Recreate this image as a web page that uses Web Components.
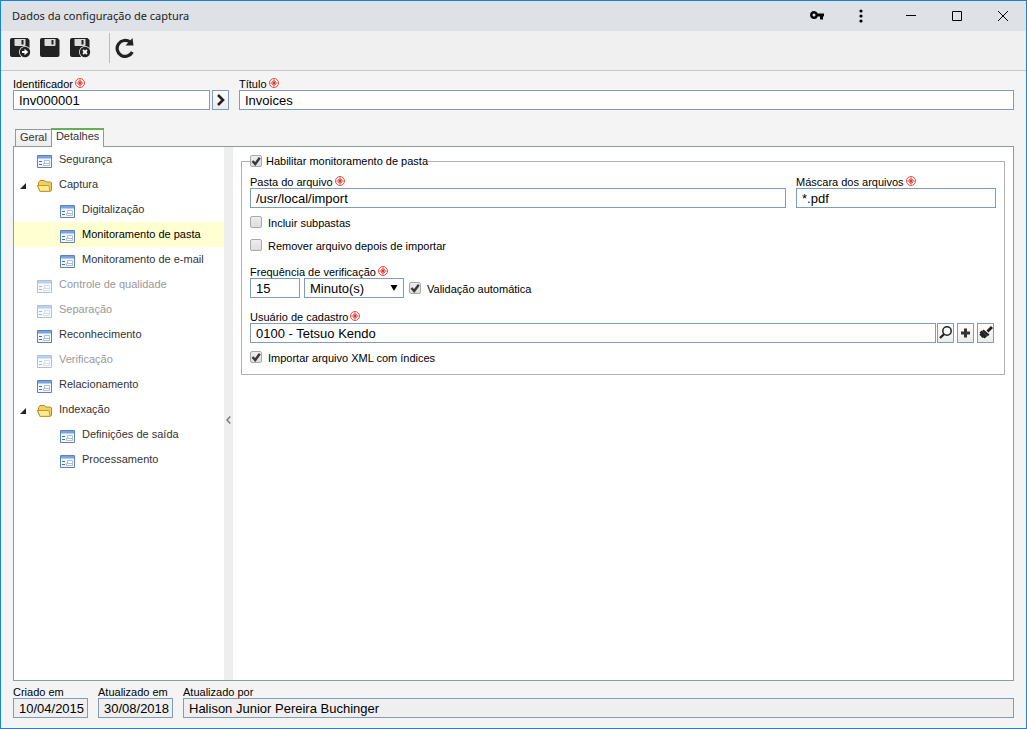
<!DOCTYPE html>
<html lang="pt-BR">
<head>
<meta charset="utf-8">
<title>Dados da configuração de captura</title>
<style>
  body { margin: 0; font: 11px/14px "Liberation Sans", Arial, sans-serif; color: #000; --line: #7f9db9; --frame: #8f9d9a; }
  .grow { flex: 1; }
</style>
</head>
<body>
<app-window>
  <title-bar slot="title">Dados da configuração de captura</title-bar>
  <tool-bar slot="tools"></tool-bar>
  <field-row>
    <text-field class="id" label="Identificador" value="Inv000001" required style="width:197px"></text-field>
    <icon-button icon="next" label="Próximo" style="margin-left:2px"></icon-button>
    <text-field class="grow" label="Título" value="Invoices" required style="margin-left:10px"></text-field>
  </field-row>
  <tab-strip></tab-strip>
  <split-panel>
    <nav-tree slot="side">
      <tree-item text="Segurança"></tree-item>
      <tree-item text="Captura" folder>
        <tree-item text="Digitalização" level="2"></tree-item>
        <tree-item text="Monitoramento de pasta" level="2" selected></tree-item>
        <tree-item text="Monitoramento de e-mail" level="2"></tree-item>
      </tree-item>
      <tree-item text="Controle de qualidade" disabled></tree-item>
      <tree-item text="Separação" disabled></tree-item>
      <tree-item text="Reconhecimento"></tree-item>
      <tree-item text="Verificação" disabled></tree-item>
      <tree-item text="Relacionamento"></tree-item>
      <tree-item text="Indexação" folder>
        <tree-item text="Definições de saída" level="2"></tree-item>
        <tree-item text="Processamento" level="2"></tree-item>
      </tree-item>
    </nav-tree>
    <group-box>
      <check-box slot="legend" label="Habilitar monitoramento de pasta" checked legend></check-box>
      <field-row style="gap:10px">
        <text-field class="grow" label="Pasta do arquivo" value="/usr/local/import" required></text-field>
        <text-field label="Máscara dos arquivos" value="*.pdf" required style="width:200px"></text-field>
      </field-row>
      <check-box label="Incluir subpastas" style="margin-top:8px"></check-box>
      <check-box label="Remover arquivo depois de importar" style="margin-top:9px"></check-box>
      <field-row style="margin-top:13px">
        <text-field label="Frequência de verificação" value="15" required style="width:50px"></text-field>
        <select-field label="Unidade" value="Minuto(s)" style="margin-left:4px"></select-field>
        <check-box label="Validação automática" checked style="margin:0 0 2px 5px"></check-box>
      </field-row>
      <field-row style="margin-top:13px; padding-right:2px; gap:3px">
        <text-field class="grow" label="Usuário de cadastro" value="0100 - Tetsuo Kendo" required></text-field>
        <icon-button icon="search" label="Pesquisar" style="margin-left:-2px"></icon-button>
        <icon-button icon="plus" label="Adicionar"></icon-button>
        <icon-button icon="brush" label="Limpar"></icon-button>
      </field-row>
      <check-box label="Importar arquivo XML com índices" checked style="margin-top:8px"></check-box>
    </group-box>
  </split-panel>
  <field-row slot="status" style="gap:10px">
    <text-field label="Criado em" value="10/04/2015" readonly style="width:75px"></text-field>
    <text-field label="Atualizado em" value="30/08/2018" readonly style="width:75px"></text-field>
    <text-field class="grow" label="Atualizado por" value="Halison Junior Pereira Buchinger" readonly></text-field>
  </field-row>
</app-window>

<script>
const base = '*{box-sizing:border-box} button{padding:0;font:inherit;cursor:pointer} svg{display:block} ';
function define(name, render) {
  customElements.define(name, class extends HTMLElement {
    connectedCallback() {
      if (this.shadowRoot) return;
      const root = this.attachShadow({ mode: 'open' });
      const t = document.createElement('template');
      const [css, html] = render(this);
      t.innerHTML = `<style>${base}${css}</style>${html}`;
      root.append(t.content.cloneNode(true));
    }
  });
}

define('app-window', () => [`
  :host{display:flex;flex-direction:column;min-height:100vh;box-sizing:border-box;border:1px solid #1883d7;background:#f4f4f4}
  main{flex:1;display:flex;flex-direction:column;padding:7px 12px 0}
  footer{padding:5px 12px 10px}`,
  `<slot name="title"></slot><slot name="tools"></slot><main><slot></slot></main><footer><slot name="status"></slot></footer>`]);

define('title-bar', () => [`
  :host{display:flex;height:30px;background:#dee1e6;color:#222}
  h1{flex:1;margin:0;padding-left:11px;font:400 11px/30px "Noto Sans","Open Sans",sans-serif}
  button{border:0;background:none;width:46px;display:grid;place-items:center}
  .app{width:44px} .more{margin-right:5px}`,
  `<h1><slot></slot></h1>
  <button class="app" aria-label="Chave"><svg width="16" height="12" viewBox="0 0 16 12"><path fill-rule="evenodd" d="M5 1a4 4 0 1 0 3.800 5.500H11V9.500h3V6.500H15V3.500H8.800A4 4 0 0 0 5 1zm0 2.500a1.500 1.500 0 1 1 0 3 1.500 1.500 0 0 1 0-3z" fill="#000"/></svg></button>
  <button class="app more" aria-label="Menu"><svg width="4" height="14"><circle cx="2" cy="2" r="1.600"/><circle cx="2" cy="7" r="1.600"/><circle cx="2" cy="12" r="1.600"/></svg></button>
  <button aria-label="Minimizar"><svg width="10" height="10"><path d="M0 4.500H10" stroke="#000"/></svg></button>
  <button aria-label="Maximizar"><svg width="10" height="10"><path d="M.5.5h9v9h-9z" fill="none" stroke="#000"/></svg></button>
  <button aria-label="Fechar"><svg width="10" height="10"><path d="M0 0L10 10M10 0L0 10" stroke="#000"/></svg></button>`]);

const disk = '<path fill="#222" d="M2 1H17.500L19.500 3V18Q19.500 20 17.500 20H2Q0 20 0 18V3Q0 1 2 1z"/><path fill="#dcdcdc" d="M4.500 2H15.500V8Q15.500 9 14.500 9H5.500Q4.500 9 4.500 8z"/><path fill="#222" d="M11.500 3h2v4.500h-2z"/>';
define('tool-bar', () => [`
  :host{display:flex;align-items:flex-start;gap:10px;height:40px;padding:2px 9px 0;background:#f0f0f0;border-bottom:1px solid #c8c8c8;box-sizing:border-box}
  button{border:0;background:none;margin-top:4px;width:20px;height:20px}
  i{width:1px;height:30px;margin-left:9px;margin-right:-5px;background:#bbb}`,
  `<button aria-label="Salvar e novo"><svg width="21" height="21">${disk}<circle cx="15" cy="15" r="6" fill="#f0f0f0"/><circle cx="15" cy="15" r="5.200" fill="#222"/><path fill="#fff" d="M12 14h2.500V11.800L18.300 15l-3.800 3.200V16H12z"/></svg></button>
  <button aria-label="Salvar"><svg width="21" height="21">${disk}</svg></button>
  <button aria-label="Salvar e fechar"><svg width="21" height="21">${disk}<circle cx="15" cy="15" r="6" fill="#f0f0f0"/><circle cx="15" cy="15" r="5.200" fill="#222"/><path stroke="#fff" stroke-width="1.800" d="M13 13l4 4M17 13l-4 4"/></svg></button>
  <i></i>
  <button aria-label="Atualizar"><svg width="20" height="21"><path d="M17.300 15A8 8 0 1 1 15.200 5.200" fill="none" stroke="#222" stroke-width="3.200"/><path d="M17.500 1L18.500 8.500H10.500z" fill="#222"/></svg></button>`]);

define('field-row', () => [`:host{display:flex;align-items:flex-end}`, `<slot></slot>`]);

const mark = '<svg class="req" width="10" height="10" aria-hidden="true"><circle cx="5" cy="5" r="4.500" fill="#fff" stroke="#e5382c" stroke-width=".9"/><path d="M5 1.500v7M1.500 5h7" stroke="#e0281e" stroke-width="1.200"/><path d="M3 3l4 4M7 3l-4 4" stroke="#e0281e" stroke-width=".7"/></svg>';
define('text-field', el => [`
  :host{display:block;min-width:0}
  label{display:flex;height:12px;line-height:12px;white-space:nowrap}
  .req{margin-left:2px;flex:none}
  input{display:block;width:100%;height:20px;margin:0;padding:0 0 0 5px;border:1px solid var(--line);border-radius:0;background:#fff;color:#000;font:13px "Liberation Sans",Arial,sans-serif;outline:0}
  input[readonly]{background:#efefef}`,
  `<label for="f">${el.getAttribute('label')}${el.hasAttribute('required') ? mark : ''}</label>
  <input id="f" type="text" value="${el.getAttribute('value')}" ${el.hasAttribute('readonly') ? 'readonly' : ''}>`]);

define('select-field', el => [`
  :host{display:block;width:100px;position:relative}
  select{display:block;width:100%;height:20px;margin:0;padding:0 18px 0 5px;border:1px solid var(--line);border-radius:0;background:#fff;color:#000;font:13px "Liberation Sans",Arial,sans-serif;appearance:none}
  svg{position:absolute;right:6px;top:7px;pointer-events:none}`,
  `<select aria-label="${el.getAttribute('label')}"><option>${el.getAttribute('value')}</option></select>
  <svg width="8" height="7"><path d="M.5 0h7L4 6z"/></svg>`]);

define('check-box', el => [`
  :host{display:block}
  label{display:flex;align-items:${el.hasAttribute('legend') ? 'center;gap:4px' : 'flex-start;gap:6px'};line-height:14px;white-space:nowrap}
  .box{display:grid;width:12px;height:12px}
  .box>*{grid-area:1/1}
  input{appearance:none;margin:0;width:12px;height:12px;border:1px solid #aaa;border-radius:2px;background:linear-gradient(#eee,#ddd)}
  svg{pointer-events:none;visibility:hidden} input:checked+svg{visibility:visible}`,
  `<label><span class="box"><input type="checkbox" ${el.hasAttribute('checked') ? 'checked' : ''}><svg width="12" height="12"><path d="M2.500 6l2.700 3L9.800 2.700" fill="none" stroke="#3a3a3a" stroke-width="2.400"/></svg></span><span>${el.getAttribute('label')}</span></label>`]);

const glyphs = {
  next: '<path d="M5 4l5 5L5 14" fill="none" stroke="#222" stroke-width="2.600"/>',
  search: '<circle cx="9" cy="7" r="4.200" fill="none" stroke="#222" stroke-width="1.500"/><path d="M6.200 10L2 14" stroke="#222" stroke-width="2.400"/>',
  plus: '<path d="M3 9h9M7.500 4.500v9" stroke="#333" stroke-width="3"/>',
  brush: '<path d="M14 3L9.500 7.500" stroke="#222" stroke-width="3"/><path d="M5.500 5.500l6 5-1.500 1.800-6-5z" fill="#222"/><path d="M3.500 6.500L9.500 12 6.500 14.500 5.500 13.500 4.500 14 1.300 10.500 2.500 9.500 1.500 8.500z" fill="#222"/>'
};
define('icon-button', el => [`
  :host{display:block;flex:none}
  button{display:grid;place-items:center;width:17px;height:20px;border:1px solid var(--line);background:linear-gradient(#fff,#ebebeb)}`,
  `<button aria-label="${el.getAttribute('label')}"><svg width="15" height="18">${glyphs[el.getAttribute('icon')]}</svg></button>`]);

define('tab-strip', () => [`
  :host{display:flex;align-items:flex-end;margin-top:18px;padding-left:2px}
  button{border:1px solid var(--frame);border-bottom:0;padding:0 4px 2px;color:#333;line-height:14px;height:17px;background:linear-gradient(#f8f8f8,#ededed);border-right:0}
  .on{position:relative;z-index:1;height:19px;line-height:12px;margin-bottom:-1px;background:#fff;border-right:1px solid var(--frame);border-top:2px solid #62b152;padding-bottom:6px}`,
  `<button role="tab" aria-selected="false">Geral</button><button role="tab" class="on" aria-selected="true">Detalhes</button>`]);

define('split-panel', () => [`
  :host{flex:1;display:grid;grid-template-columns:210px 9px minmax(0,1fr);border:1px solid var(--frame);background:#fff}
  .split{display:flex;align-items:center;justify-content:center;background:#eee;border:0;padding-top:12px}
  section{padding:7px 8px 8px}`,
  `<slot name="side"></slot><button class="split" aria-label="Recolher"><svg width="5" height="8"><path d="M4.300.5L1 4l3.300 3.500" fill="none" stroke="#777" stroke-width="1.400"/></svg></button><section><slot></slot></section>`]);

define('nav-tree', () => [`:host{display:block}`, `<nav><slot></slot></nav>`]);

const form = '<svg class="ic" width="15" height="13"><path fill="#f4f7fc" stroke="#5c82bd" d="M.5.5h14v12H.5z"/><path fill="#77a3e2" d="M1 1h13v2.500H1z"/><path stroke="#3f6fba" d="M2 6.500h3M2 9.500h3"/><path fill="#fff" stroke="#b4bfcd" d="M7.500 5.500H12.500V10.500H6.500V8.500H12.500M7.500 5.500V8.500"/></svg>';
const folder = '<svg class="ic" width="16" height="13"><path fill="#f2cf63" stroke="#b98a1a" d="M1.500 6V3.500L3 1.500h4.500L9 3h4.500L14.500 4v7.500L12.500 12.500H3L.5 6.500z"/><path fill="#ffeb96" stroke="#c59a2a" d="M.6 6.500H12L13 12.300H3z"/></svg>';
define('tree-item', el => {
  const dir = el.hasAttribute('folder'), off = el.hasAttribute('disabled'), sel = el.hasAttribute('selected');
  return [`
  :host{display:block}
  a{display:flex;align-items:center;height:25px;padding-left:${el.getAttribute('level') ? 46 : dir ? 6 : 23}px;color:${sel ? '#000' : '#333'};text-decoration:none;white-space:nowrap;background:${sel ? '#ffffd2' : 'none'}}
  span{padding-bottom:2px}
  .arrow{margin:2px 11px 0 0}
  .ic{margin:${dir ? '1px 6px 0 0' : '3px 7px 0 0'}}
  a[aria-disabled]{color:#999} a[aria-disabled] .ic{opacity:.5}`,
  `<a href="#" ${off ? 'aria-disabled="true"' : ''}>${dir ? '<svg class="arrow" width="6" height="6"><path d="M6 0v6H0z" fill="#222"/></svg>' + folder : form}<span>${el.getAttribute('text')}</span></a><slot></slot>`];
});

define('group-box', () => [`
  :host{display:block}
  fieldset{margin:0;min-width:0;border:1px solid #b0b0b0;padding:8px 8px 9px}
  legend{padding:0}`,
  `<fieldset><legend><slot name="legend"></slot></legend><slot></slot></fieldset>`]);
</script>
</body>
</html>
